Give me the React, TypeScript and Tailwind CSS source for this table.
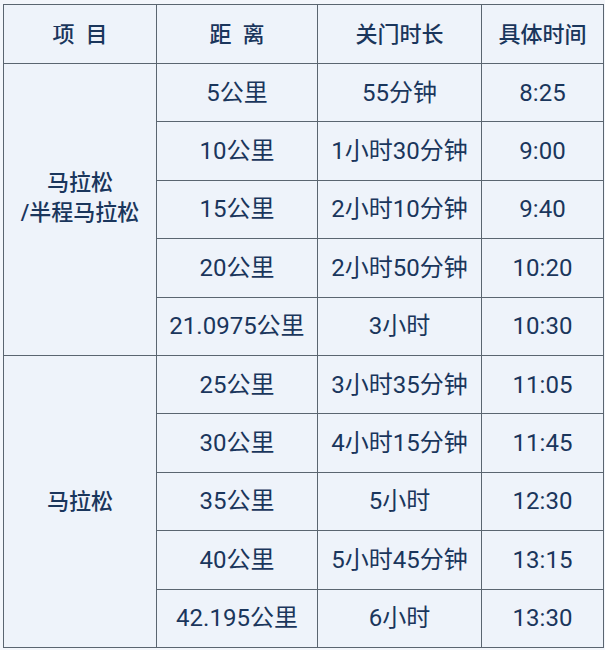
import React from 'react';

const rows = [
  { dist: '5公里', limit: '55分钟', time: '8:25' },
  { dist: '10公里', limit: '1小时30分钟', time: '9:00' },
  { dist: '15公里', limit: '2小时10分钟', time: '9:40' },
  { dist: '20公里', limit: '2小时50分钟', time: '10:20' },
  { dist: '21.0975公里', limit: '3小时', time: '10:30' },
  { dist: '25公里', limit: '3小时35分钟', time: '11:05' },
  { dist: '30公里', limit: '4小时15分钟', time: '11:45' },
  { dist: '35公里', limit: '5小时', time: '12:30' },
  { dist: '40公里', limit: '5小时45分钟', time: '13:15' },
  { dist: '42.195公里', limit: '6小时', time: '13:30' },
];

const cell = 'border-[1.5px] border-[#5a6570] text-center align-middle';

export default function App() {
  return (
    <div
      className="w-[605px] h-[650px] bg-[#f3f6fb] pt-[4px] pl-[3px]"
      style={{ fontFamily: 'Roboto, "Noto Sans CJK SC", sans-serif' }}
    >
      <table className="border-collapse bg-[#eef3fa] text-[#1a365c] table-fixed w-[600px]">
        <colgroup>
          <col className="w-[153px]" />
          <col className="w-[161px]" />
          <col className="w-[164px]" />
          <col className="w-[122px]" />
        </colgroup>
        <thead>
          <tr className="h-[59px]">
            <th className={`${cell} text-[22px] font-medium`}>项&nbsp;&nbsp;目</th>
            <th className={`${cell} text-[22px] font-medium`}>距&nbsp;&nbsp;离</th>
            <th className={`${cell} text-[22px] font-medium`}>关门时长</th>
            <th className={`${cell} text-[22px] font-medium`}>具体时间</th>
          </tr>
        </thead>
        <tbody>
          {rows.map((r, i) => (
            <tr key={r.dist} className="h-[58.4px]">
              {i === 0 && (
                <td rowSpan={5} className={`${cell} text-[22px] leading-[30px] font-medium pb-[22px]`}>
                  马拉松
                  <br />
                  /半程马拉松
                </td>
              )}
              {i === 5 && (
                <td rowSpan={5} className={`${cell} text-[22px] font-medium`}>
                  马拉松
                </td>
              )}
              <td className={`${cell} text-[24px]`}>{r.dist}</td>
              <td className={`${cell} text-[24px]`}>{r.limit}</td>
              <td className={`${cell} text-[24px]`}>{r.time}</td>
            </tr>
          ))}
        </tbody>
      </table>
    </div>
  );
}
